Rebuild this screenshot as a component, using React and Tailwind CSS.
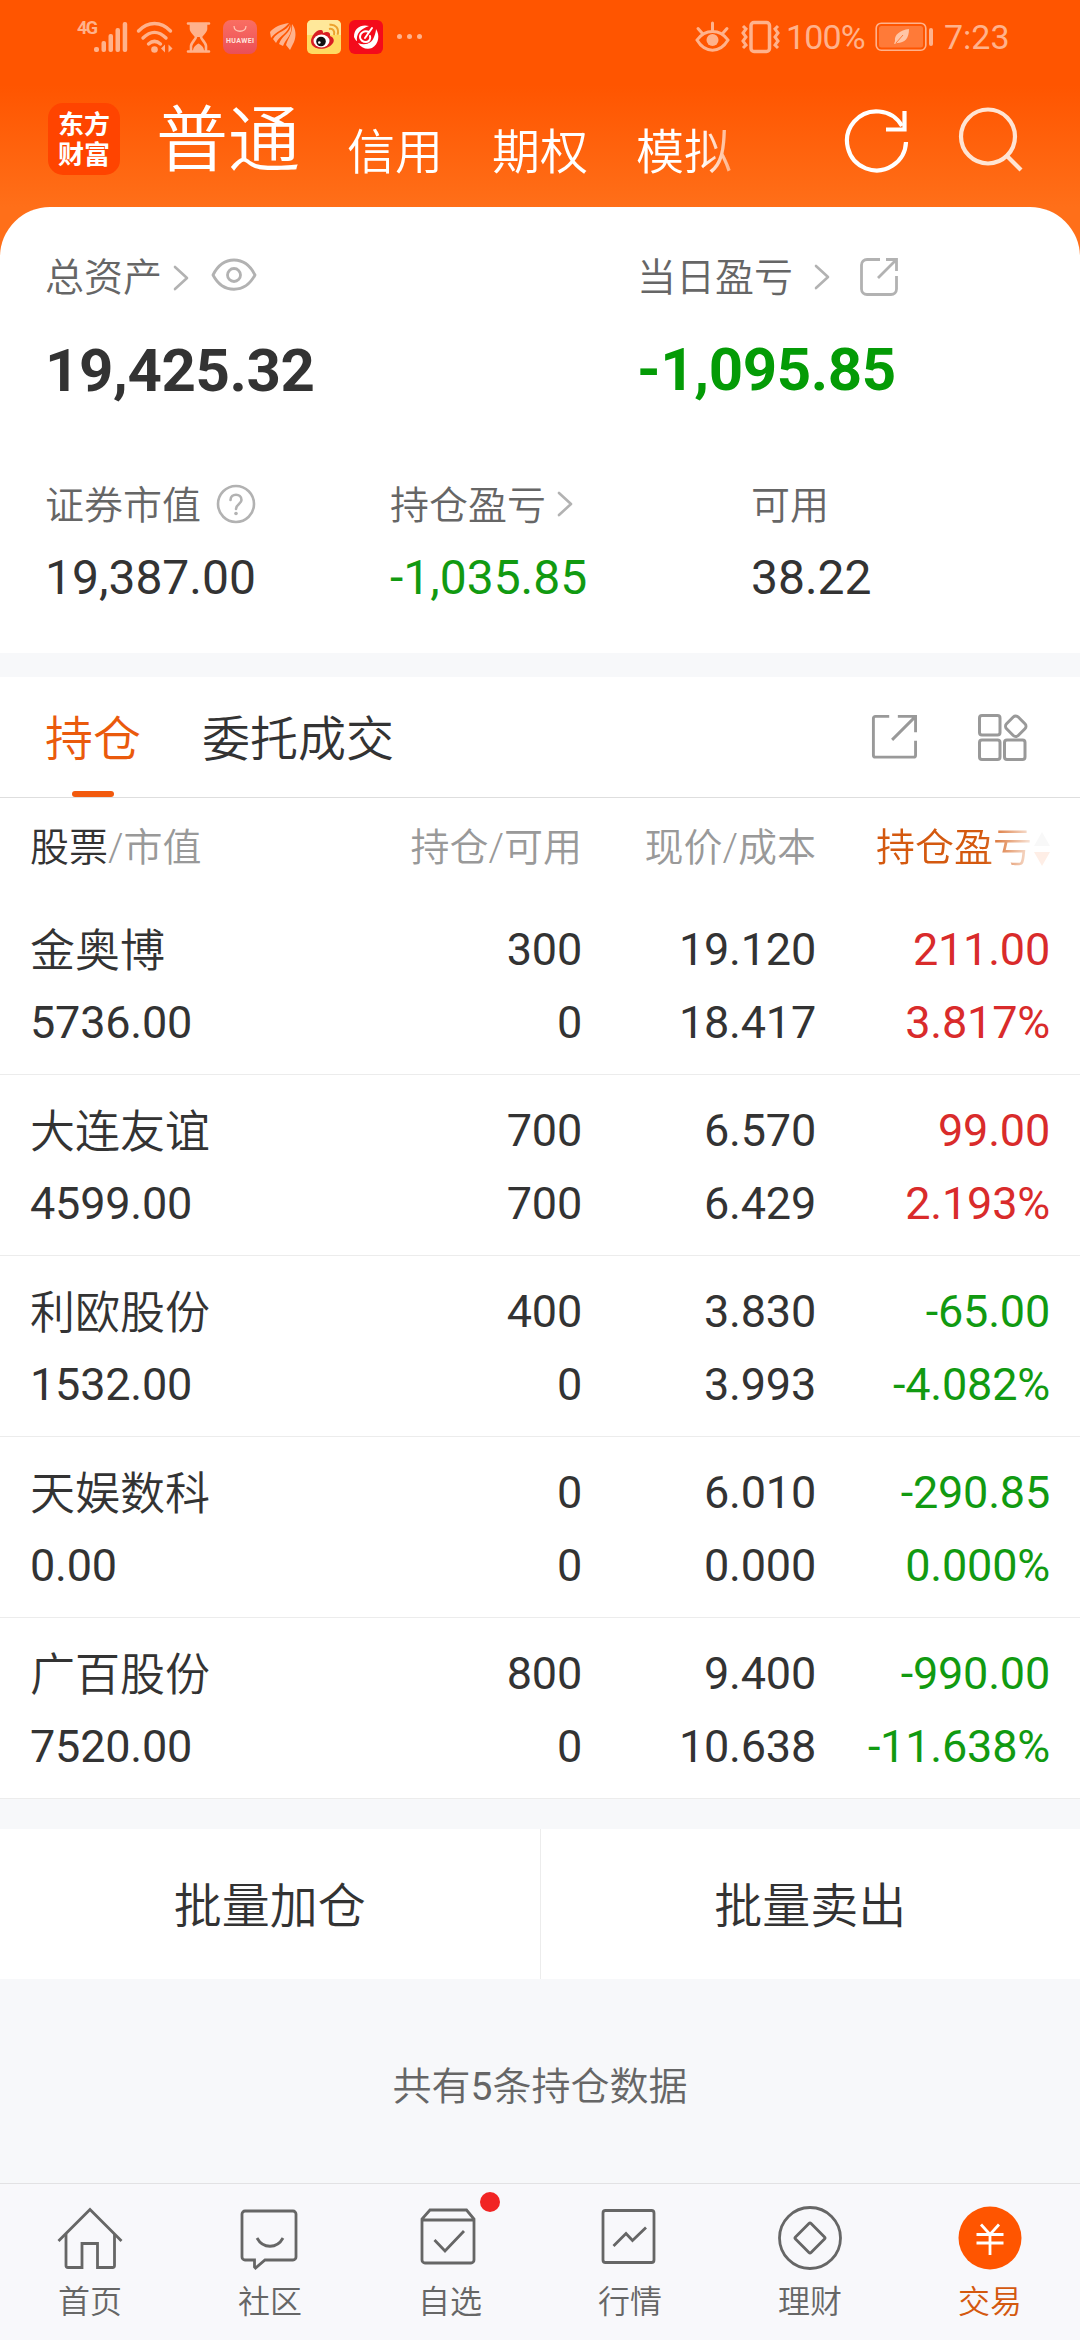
const holdings = [
  { name: "金奥博", value: "5736.00", qty: "300", avail: "0", price: "19.120", cost: "18.417", profit: "211.00", rate: "3.817%", up: true },
  { name: "大连友谊", value: "4599.00", qty: "700", avail: "700", price: "6.570", cost: "6.429", profit: "99.00", rate: "2.193%", up: true },
  { name: "利欧股份", value: "1532.00", qty: "400", avail: "0", price: "3.830", cost: "3.993", profit: "-65.00", rate: "-4.082%", up: false },
  { name: "天娱数科", value: "0.00", qty: "0", avail: "0", price: "6.010", cost: "0.000", profit: "-290.85", rate: "0.000%", up: false },
  { name: "广百股份", value: "7520.00", qty: "800", avail: "0", price: "9.400", cost: "10.638", profit: "-990.00", rate: "-11.638%", up: false },
];

function Chevron({ className }) {
  return (
    <svg className={className} width="16" height="26" viewBox="0 0 16 26" fill="none" stroke="#b2b2b2" strokeWidth="2.6" strokeLinecap="round" strokeLinejoin="round">
      <path d="M2 2l12 11L2 24" />
    </svg>
  );
}

function StatusBar() {
  return (
    <div className="flex h-[73px] items-center pl-[77px] pr-[72px] text-[#ffb28c]">
      <span className="-mr-[1px] -mt-[18px] w-[18px] text-[18px] font-bold leading-[22px] tracking-[-1.5px]">4G</span>
      <svg width="34" height="34" viewBox="17 0 34 34" fill="currentColor">
        <rect x="17" y="27" width="5" height="5" rx="2" />
        <rect x="24.500" y="21" width="4.500" height="11" rx="2" />
        <rect x="31.500" y="14" width="4.500" height="18" rx="2" />
        <rect x="38.500" y="8" width="4.500" height="24" rx="2" />
        <rect x="45.700" y="2" width="4.500" height="30" rx="2" />
      </svg>
      <svg className="ml-2" width="38" height="34" viewBox="0 0 38 34" fill="none" stroke="currentColor" strokeWidth="3.400" strokeLinecap="round">
        <path d="M2.500 11C12 1 25 1 34.500 11" />
        <path d="M7 18C14.500 10.500 22.500 10.500 30 18" />
        <path d="M12.500 24C16.500 20.500 20.500 20.500 24.500 24" />
        <circle cx="18.500" cy="29.500" r="3.300" fill="currentColor" stroke="none" />
        <path d="M29 24.500v8l-4-4zM32.500 32.500v-8l4 4z" fill="currentColor" stroke="none" />
      </svg>
      <svg className="ml-[11px]" width="26" height="34" viewBox="0 0 26 34" fill="none" stroke="currentColor" strokeWidth="2.600" strokeLinecap="round">
        <path d="M3 3.500h21M3 31.500h21" />
        <path d="M6 4v5c0 3 5 6 5 8s-5 6-5 9v5M21 4v5c0 3-5 6-5 8s5 6 5 9v5" />
        <path d="M6 4h15v5c0 3-4 6-5.500 8h-4C10 15 6 12 6 9z" fill="currentColor" stroke="none" />
        <path d="M8 31c0-4 3-6 5.500-7.500C16 25 19 27 19 31z" fill="currentColor" stroke="none" />
      </svg>
      <div className="ml-[12px] flex h-[34px] w-[34px] flex-col items-center rounded-[8px] bg-gradient-to-b from-[#fa6e62] to-[#ea4f58]">
        <svg className="mt-1.5" width="14" height="7" viewBox="0 0 14 7" fill="none" stroke="#ffc4b4" strokeWidth="1.300">
          <path d="M1 0c0 7 12 7 12 0" />
        </svg>
        <svg className="mt-[3px]" width="28" height="8" viewBox="0 0 28 8" fill="#ffe3dc">
          <text x="0" y="6.500" fontSize="7" fontWeight="700" fontFamily="Roboto" textLength="28">HUAWEI</text>
        </svg>
      </div>
      <svg className="ml-[13px]" width="27" height="30" viewBox="0 0 27 30" fill="currentColor">
        <path d="M19 1C11 2 4 5 0 10l1 6C6 9 14 8 19 1z" />
        <path d="M20 2C17 9 8 9 3 17l3 4c4-8 12-9 14-19z" />
        <path d="M21 2c0 9-9 11-12 20l4 2c3-8 10-11 8-22z" />
        <path d="M22 2c4 5 4.500 12 2 18l-4 8-4-5c2-7 7-12 6-21z" />
      </svg>
      <svg className="ml-[10px]" width="34" height="34" viewBox="0 0 34 34" fill="none">
        <rect width="34" height="34" rx="5" fill="#ffdb62" />
        <path d="M0 5a5 5 0 0 1 5-5h24a5 5 0 0 1 5 5v10H0z" fill="#ffe89a" />
        <path d="M4 21c0-5 6-12 10-11 2 0 2 2 2 3 4-2 8-1 7 3 3 1 5 4 3 7-5 8-22 8-22-2z" fill="#d81e23" />
        <ellipse cx="14.500" cy="21" rx="8" ry="6.500" fill="#fff" />
        <circle cx="14" cy="21.500" r="4.800" fill="#111" />
        <circle cx="12.300" cy="22.500" r="1.300" fill="#fff" />
        <path d="M22 9c4-1 6 2 5 6M22.500 4.800c6-1 10 4 8 10" stroke="#eca22d" strokeWidth="2" />
      </svg>
      <svg className="ml-2" width="34" height="34" viewBox="0 0 34 34" fill="#fff">
        <rect width="34" height="34" rx="6" fill="#f40b1b" />
        <path d="M20 6C12 4 5 8 5 17c1 2 2 4 3 4-1-7 3-12 12-15z" />
        <path d="M27 9c4 6 3 15-4 19-5 2-11 0-14-5 8 3 14 0 16-6 1-3 2-5 2-8z" />
        <path d="M20 12c-5-2-9 1-9 5 0 3 3 5 6 5s5-3 4-6M16 18l7-10" fill="none" stroke="#fff" strokeWidth="2" strokeLinecap="round" />
      </svg>
      <div className="ml-[14px] flex gap-[5px]">
        <i className="h-[5px] w-[5px] rounded-full bg-current" />
        <i className="h-[5px] w-[5px] rounded-full bg-current" />
        <i className="h-[5px] w-[5px] rounded-full bg-current" />
      </div>

      <svg className="ml-auto" width="35" height="32" viewBox="0 0 35 32" fill="none" stroke="currentColor" strokeWidth="3" strokeLinecap="round">
        <path d="M2 19C10 7.500 25 7.500 33 19 25 32.500 10 32.500 2 19zM17.500 9V2M7 12L3 7.500M28 12l4-4.500" />
        <circle cx="17.500" cy="19" r="6" fill="currentColor" stroke="none" />
      </svg>
      <svg className="ml-[10px]" width="41" height="34" viewBox="0 0 41 34" fill="none" stroke="currentColor" strokeWidth="3">
        <rect x="11" y="2.500" width="18.500" height="29" rx="3" strokeWidth="3.500" />
        <path d="M3 6l3 3-3 4 3 4-3 4 3 4-3 3M38 6l-3 3 3 4-3 4 3 4-3 4 3 3" />
      </svg>
      <span className="ml-[5px] w-[83px] text-[34px] leading-none tracking-tight">100%</span>
      <svg className="ml-[6px]" width="59" height="30" viewBox="0 0 59 30" fill="none">
        <rect x="1.200" y="1.200" width="49.600" height="27" rx="5" stroke="currentColor" strokeWidth="1.600" />
        <rect x="4" y="4" width="44" height="21.500" rx="2.500" fill="#ff7a38" />
        <path d="M34 7c-9 1-15 6-14 12l-1 3 3-1c8 0 12-5 12-14z" fill="#ffc5a6" />
        <path d="M21 21l7-8" stroke="#ff7a38" strokeWidth="1" />
        <rect x="54" y="6" width="4" height="18" rx="2" fill="currentColor" />
      </svg>
      <span className="ml-[10px] w-[64px] text-[34px] leading-none">7:23</span>
    </div>
  );
}

function TopTabs() {
  return (
    <div className="flex h-[134px] items-start pl-12 text-white">
      <div className="mt-[30px] flex h-[72px] w-[72px] flex-col items-center rounded-[15px] bg-[#ff4400] pt-[7px] text-[26px] font-bold leading-[30px]">
        <span>东方</span>
        <span>财富</span>
      </div>
      <div className="ml-[36px] flex h-[134px] w-[620px] items-start whitespace-nowrap text-[48px] font-[350] leading-[159px] [mask-image:linear-gradient(to_right,#000_545px,transparent_605px)]">
        <span className="text-[72px] leading-[136px]">普通</span>
        <span className="ml-[47px]">信用</span>
        <span className="ml-[49px]">期权</span>
        <span className="ml-12">模拟</span>
      </div>
      <svg className="ml-[68px] mt-[34px]" width="66" height="66" viewBox="0 0 66 66" fill="none" stroke="#fff" strokeWidth="4.200">
        <path d="M62 35A29.500 29.500 0 1 1 58 19" />
        <path d="M60.500 4v18.500H42" />
      </svg>
      <svg className="ml-[47px] mt-[33px]" width="66" height="66" viewBox="0 0 66 66" fill="none" stroke="#ffe4d3" strokeWidth="4.200">
        <circle cx="31" cy="30.500" r="27" />
        <path d="M50 50l14 14" />
      </svg>
    </div>
  );
}

function Assets() {
  return (
    <div className="h-[446px] rounded-t-[50px] bg-white pt-[50px] text-[#333]">
      <div className="flex pl-[45px]">
        <div className="w-[592px]">
          <div className="flex h-[39px] items-center text-[39px] leading-[39px] text-[#666]">
            <span className="pt-[3px] font-[350]">总资产</span>
            <Chevron className="ml-[11px] mt-[2px]" />
            <svg className="-mt-[4px] ml-[22px]" width="46" height="34" viewBox="0 0 46 34" fill="none" stroke="#b2b2b2" strokeWidth="2.800">
              <path d="M2 17C12-3 34-3 44 17 34 36 12 36 2 17z" strokeLinejoin="round" />
              <circle cx="23" cy="17" r="6.500" />
            </svg>
          </div>
          <div className="mt-[45px] text-[60px] font-bold leading-[60px] tracking-[-0.4px]">19,425.32</div>
        </div>
        <div>
          <div className="flex h-[39px] items-center text-[39px] leading-[39px] text-[#666]">
            <span className="pt-[4px] font-[350]">当日盈亏</span>
            <Chevron className="ml-[21px]" />
            <svg className="ml-[29px]" width="40" height="40" viewBox="0 0 40 40" fill="none" stroke="#b2b2b2" strokeWidth="2.800">
              <path d="M21 2.500H8A5.500 5.500 0 0 0 2.500 8v24A5.500 5.500 0 0 0 8 37.500h24a5.500 5.500 0 0 0 5.500-5.500V19" />
              <path d="M27 2.500h10.500V14M37 3L19 21" />
            </svg>
          </div>
          <div className="mt-[44px] text-[60px] font-bold leading-[60px] tracking-[-0.4px] text-[#049b06]">-1,095.85</div>
        </div>
      </div>

      <div className="mt-[83px] flex pl-[45px] text-[48px] leading-[48px]">
        <div className="w-[345px]">
          <div className="flex h-[40px] items-center text-[39px] leading-[40px] text-[#666]">
            <span className="pt-[3px] font-[350]">证券市值</span>
            <svg className="ml-[15px]" width="40" height="40" viewBox="0 0 40 40" fill="none" stroke="#b2b2b2" strokeWidth="2.600">
              <circle cx="20" cy="20" r="18" />
              <path d="M14.500 16c0-7 11-7 11 0 0 4-5.500 4-5.500 9" strokeLinecap="round" />
              <circle cx="20" cy="29.500" r="1.800" fill="#b2b2b2" stroke="none" />
            </svg>
          </div>
          <div className="mt-[30px]">19,387.00</div>
        </div>
        <div className="w-[361px]">
          <div className="flex h-[40px] items-center text-[39px] leading-[40px] text-[#666]">
            <span className="pt-[3px] font-[350]">持仓盈亏</span>
            <Chevron className="ml-[11px]" />
          </div>
          <div className="mt-[30px] text-[#119a11]">-1,035.85</div>
        </div>
        <div>
          <div className="h-[40px] pt-[2px] text-[39px] font-[350] leading-[40px] text-[#666]">可用</div>
          <div className="mt-[30px]">38.22</div>
        </div>
      </div>
    </div>
  );
}

function Tabs() {
  return (
    <div className="flex h-[121px] items-start border-b border-[#dedede] bg-white pl-[45px] pr-[51px] text-[48px] font-[350] leading-[126px] text-[#333]">
      <div className="flex h-[120px] flex-col items-center text-[#ea5a0c]">
        <span className="h-[114px]">持仓</span>
        <i className="h-[6px] w-[42px] rounded-full bg-[#f25a0e]" />
      </div>
      <span className="ml-[61px]">委托成交</span>
      <svg className="ml-auto mt-[37px]" width="46" height="46" viewBox="0 0 48 48" fill="none" stroke="#999" strokeWidth="3">
        <path d="M19 2.500H4.500a2 2 0 0 0-2 2V43a2 2 0 0 0 2 2h40a2 2 0 0 0 2-2V28" />
        <path d="M28 2.500h18.500V19M46 3L22 27" />
      </svg>
      <svg className="ml-[60px] mt-[36px]" width="52" height="50" viewBox="0 0 52 50" fill="none" stroke="#999" strokeWidth="3">
        <rect x="2.500" y="2.500" width="20.500" height="19.500" rx="2.500" />
        <rect x="2.500" y="27" width="20.500" height="19.500" rx="2.500" />
        <rect x="27.500" y="27" width="20.500" height="19.500" rx="2.500" />
        <rect x="30.500" y="5" width="16.500" height="16.500" rx="3.500" transform="rotate(45 38.750 13.250)" />
      </svg>
    </div>
  );
}

function HoldingTable() {
  return (
    <div className="bg-white text-[45px] text-[#333]">
      <div className="grid h-24 grid-cols-[1fr_234px_234px_234px] px-[30px] text-right text-[39px] font-[350] leading-[100px] text-[#999]">
        <span className="text-left"><span className="text-[#333]">股票</span>/市值</span>
        <span>持仓/可用</span>
        <span>现价/成本</span>
        <span className="flex items-start justify-end text-[#d4590f] [mask-image:linear-gradient(to_right,#000_168px,rgba(0,0,0,0.1)_218px)]">
          持仓盈亏
          <svg className="ml-[2px] mt-[34px]" width="16" height="34" viewBox="0 0 16 34">
            <path d="M8 0l8 14H0z" fill="#bbb" />
            <path d="M8 34l8-14H0z" fill="#f25a0e" />
          </svg>
        </span>
      </div>
      {holdings.map((h) => (
        <div key={h.name} className="grid h-[181px] grid-cols-[1fr_234px_234px_234px] border-b border-[#ececec] px-[30px] pt-[19px] text-right leading-[73px] tracking-[-0.2px]">
          <div className="flex flex-col text-left">
            <span className="h-[73px] pt-[2px] font-[350] tracking-normal">{h.name}</span>
            <span>{h.value}</span>
          </div>
          <div className="flex flex-col">
            <span>{h.qty}</span>
            <span>{h.avail}</span>
          </div>
          <div className="flex flex-col">
            <span>{h.price}</span>
            <span>{h.cost}</span>
          </div>
          <div className={h.up ? "flex flex-col text-[#d92b2b]" : "flex flex-col text-[#119a11]"}>
            <span>{h.profit}</span>
            <span>{h.rate}</span>
          </div>
        </div>
      ))}
    </div>
  );
}

const navItems = [
  {
    label: "首页",
    icon: (
      <>
        <path d="M1.500 35L33 3.500 64.500 35" />
        <path d="M9 28v31.500a2 2 0 0 0 2 2h14V37.500h15.500v24h15a2 2 0 0 0 2-2V28" />
      </>
    ),
  },
  {
    label: "社区",
    icon: (
      <>
        <path d="M8 5h48a3 3 0 0 1 3 3v43a3 3 0 0 1-3 3H28L18.500 62l-1-1v-7H8a3 3 0 0 1-3-3V8a3 3 0 0 1 3-3z" />
        <path d="M20 32c6 11 20 11 26 0" />
      </>
    ),
  },
  {
    label: "自选",
    dot: true,
    icon: (
      <>
        <path d="M5 14v40a3 3 0 0 0 3 3h46a3 3 0 0 0 3-3V13L49.500 4H13L5 13zM5 14h52" />
        <path d="M17.500 34l10.500 11L47 25" />
      </>
    ),
  },
  {
    label: "行情",
    icon: (
      <>
        <rect x="6" y="4.500" width="51" height="52" rx="2.500" />
        <path d="M16.500 40L29 27.500l6.500 7L49 21.500" />
      </>
    ),
  },
  {
    label: "理财",
    icon: (
      <>
        <circle cx="33" cy="32" r="30.500" />
        <rect x="22" y="21" width="22" height="22" rx="1.500" transform="rotate(45 33 32)" />
      </>
    ),
  },
  {
    label: "交易",
    active: true,
    icon: (
      <>
        <circle cx="33" cy="32" r="31.500" fill="#ff5500" stroke="none" />
        <path d="M24 18.500l9 10 9-10M19.500 28.500h27M19.500 37h27M33 28v21" stroke="#fff" />
      </>
    ),
  },
];

function BottomNav() {
  return (
    <div className="mt-auto flex h-[157px] border-t border-[#e2e2e4] bg-[#f8f8fb]">
      {navItems.map((item) => (
        <div key={item.label} className="relative flex flex-1 flex-col items-center pt-[22px]">
          <svg width="66" height="66" viewBox="0 0 66 66" fill="none" stroke="#666" strokeWidth="2.800">
            {item.icon}
          </svg>
          <span className={item.active ? "mt-[8px] text-[32px] font-[350] leading-[44px] text-[#d4590f]" : "mt-[8px] text-[32px] font-[350] leading-[44px] text-[#666]"}>
            {item.label}
          </span>
          {item.dot && <i className="absolute left-[120px] top-[8px] h-5 w-5 rounded-full bg-[#f12424]" />}
        </div>
      ))}
    </div>
  );
}

export default function App() {
  return (
    <div className="flex h-[2340px] w-[1080px] flex-col overflow-hidden bg-[#f7f8fa] font-[Roboto,'Noto_Sans_CJK_SC',sans-serif]">
      <div className="bg-[linear-gradient(to_bottom,#ff5500_85px,#ff6f19_207px)]">
        <StatusBar />
        <TopTabs />
        <Assets />
      </div>
      <div className="h-6" />
      <Tabs />
      <HoldingTable />
      <div className="mt-[30px] flex h-[150px] bg-white text-center text-[48px] font-[350] leading-[155px] text-[#333]">
        <div className="flex-1 border-r border-[#ececec]">批量加仓</div>
        <div className="flex-1">批量卖出</div>
      </div>
      <div className="mt-[82px] text-center text-[39px] font-[350] leading-[52px] text-[#666]">
        共有<span className="font-normal">5</span>条持仓数据
      </div>
      <BottomNav />
    </div>
  );
}
